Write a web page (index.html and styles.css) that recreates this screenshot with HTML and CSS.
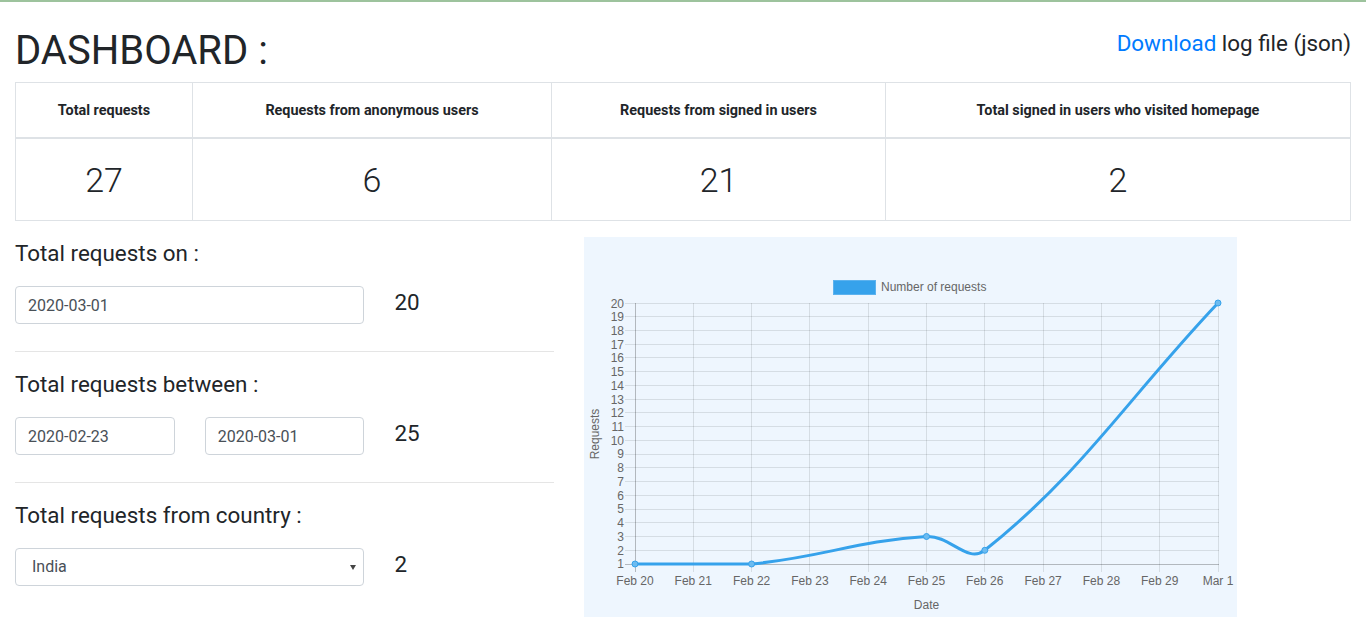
FILE: index.html
```html
<!DOCTYPE html>
<html lang="en">
<head>
<meta charset="utf-8">
<title>Dashboard</title>
<link rel="stylesheet" href="styles.css">
</head>
<body>
<div class="topbar"></div>
<div class="page">
  <header class="page-head">
    <h1 class="title">DASHBOARD :</h1>
    <p class="download"><a href="#">Download</a> log file (json)</p>
  </header>

  <table class="stats">
    <thead>
      <tr>
        <th class="w1">Total requests</th>
        <th class="w2">Requests from anonymous users</th>
        <th class="w3">Requests from signed in users</th>
        <th class="w4">Total signed in users who visited homepage</th>
      </tr>
    </thead>
    <tbody>
      <tr>
        <td>27</td>
        <td>6</td>
        <td>21</td>
        <td>2</td>
      </tr>
    </tbody>
  </table>

  <div class="layout">
    <div class="col-left">
      <section class="query">
        <h5 class="query-title">Total requests on :</h5>
        <div class="query-row">
          <div class="col-8"><input class="input" type="text" value="2020-03-01"></div>
          <div class="col-4"><div class="value">20</div></div>
        </div>
      </section>
      <hr class="divider">
      <section class="query">
        <h5 class="query-title">Total requests between :</h5>
        <div class="query-row">
          <div class="col-4"><input class="input" type="text" value="2020-02-23"></div>
          <div class="col-4"><input class="input" type="text" value="2020-03-01"></div>
          <div class="col-4"><div class="value">25</div></div>
        </div>
      </section>
      <hr class="divider">
      <section class="query">
        <h5 class="query-title">Total requests from country :</h5>
        <div class="query-row">
          <div class="col-8">
            <div class="select-wrap">
              <select class="input select">
                <option>India</option>
              </select>
            </div>
          </div>
          <div class="col-4"><div class="value">2</div></div>
        </div>
      </section>
    </div>

    <div class="col-right">
      <div class="chart">
        <svg class="chart-svg" width="653" height="380" viewBox="584 237 653 380" xmlns="http://www.w3.org/2000/svg">
          <!-- legend -->
          <rect x="833.5" y="280.5" width="42" height="14" fill="#36a2eb" stroke="#5cb2ee" stroke-width="1"/>
          <text x="881" y="291" class="lbl">Number of requests</text>

          <!-- horizontal grid -->
          <g stroke="rgba(0,0,0,0.1)" stroke-width="1">
            <line x1="625" y1="303.5" x2="1219" y2="303.5"/>
            <line x1="625" y1="316.5" x2="1219" y2="316.5"/>
            <line x1="625" y1="330.5" x2="1219" y2="330.5"/>
            <line x1="625" y1="344.5" x2="1219" y2="344.5"/>
            <line x1="625" y1="357.5" x2="1219" y2="357.5"/>
            <line x1="625" y1="371.5" x2="1219" y2="371.5"/>
            <line x1="625" y1="385.5" x2="1219" y2="385.5"/>
            <line x1="625" y1="399.5" x2="1219" y2="399.5"/>
            <line x1="625" y1="412.5" x2="1219" y2="412.5"/>
            <line x1="625" y1="426.5" x2="1219" y2="426.5"/>
            <line x1="625" y1="440.5" x2="1219" y2="440.5"/>
            <line x1="625" y1="454.5" x2="1219" y2="454.5"/>
            <line x1="625" y1="467.5" x2="1219" y2="467.5"/>
            <line x1="625" y1="481.5" x2="1219" y2="481.5"/>
            <line x1="625" y1="495.5" x2="1219" y2="495.5"/>
            <line x1="625" y1="509.5" x2="1219" y2="509.5"/>
            <line x1="625" y1="522.5" x2="1219" y2="522.5"/>
            <line x1="625" y1="536.5" x2="1219" y2="536.5"/>
            <line x1="625" y1="550.5" x2="1219" y2="550.5"/>
          </g>
          <!-- vertical grid -->
          <g stroke="rgba(0,0,0,0.1)" stroke-width="1">
            <line x1="693.5" y1="303" x2="693.5" y2="572"/>
            <line x1="751.5" y1="303" x2="751.5" y2="572"/>
            <line x1="809.5" y1="303" x2="809.5" y2="572"/>
            <line x1="868.5" y1="303" x2="868.5" y2="572"/>
            <line x1="926.5" y1="303" x2="926.5" y2="572"/>
            <line x1="984.5" y1="303" x2="984.5" y2="572"/>
            <line x1="1043.5" y1="303" x2="1043.5" y2="572"/>
            <line x1="1101.5" y1="303" x2="1101.5" y2="572"/>
            <line x1="1159.5" y1="303" x2="1159.5" y2="572"/>
            <line x1="1218.5" y1="303" x2="1218.5" y2="572"/>
          </g>
          <!-- axes -->
          <g stroke="rgba(0,0,0,0.25)" stroke-width="1">
            <line x1="635.5" y1="303" x2="635.5" y2="572"/>
            <line x1="625" y1="564.5" x2="1219" y2="564.5"/>
          </g>

          <!-- y tick labels -->
          <g class="lbl" text-anchor="end">
            <text x="624" y="307.5">20</text>
            <text x="624" y="321">19</text>
            <text x="624" y="334.8">18</text>
            <text x="624" y="348.5">17</text>
            <text x="624" y="362.2">16</text>
            <text x="624" y="376">15</text>
            <text x="624" y="389.7">14</text>
            <text x="624" y="403.5">13</text>
            <text x="624" y="417.2">12</text>
            <text x="624" y="430.9">11</text>
            <text x="624" y="444.7">10</text>
            <text x="624" y="458.4">9</text>
            <text x="624" y="472.1">8</text>
            <text x="624" y="485.9">7</text>
            <text x="624" y="499.6">6</text>
            <text x="624" y="513.3">5</text>
            <text x="624" y="527.1">4</text>
            <text x="624" y="540.8">3</text>
            <text x="624" y="554.6">2</text>
            <text x="624" y="568.3">1</text>
          </g>

          <!-- x tick labels -->
          <g class="lbl" text-anchor="middle">
            <text x="635" y="585">Feb 20</text>
            <text x="693.3" y="585">Feb 21</text>
            <text x="751.6" y="585">Feb 22</text>
            <text x="809.9" y="585">Feb 23</text>
            <text x="868.2" y="585">Feb 24</text>
            <text x="926.5" y="585">Feb 25</text>
            <text x="984.8" y="585">Feb 26</text>
            <text x="1043.1" y="585">Feb 27</text>
            <text x="1101.4" y="585">Feb 28</text>
            <text x="1159.7" y="585">Feb 29</text>
            <text x="1218" y="585">Mar 1</text>
          </g>

          <!-- axis titles -->
          <text class="lbl" x="926.5" y="608.5" text-anchor="middle">Date</text>
          <text class="lbl" x="0" y="0" text-anchor="middle" transform="translate(598.5 434) rotate(-90)">Requests</text>

          <!-- data line -->
          <path d="M635,564 C681.64,564 705.31,564 751.6,564 C821.91,557.37 856.8,540.59 926.5,536.5 C950.08,535.12 967.33,564 984.8,550.3 C1083.94,470.89 1124.72,401.92 1218,303"
                fill="none" stroke="#36a2eb" stroke-width="3" stroke-linejoin="round" stroke-linecap="round"/>
          <g fill="#6cbbf0" stroke="#36a2eb" stroke-width="1">
            <circle cx="635" cy="564" r="3"/>
            <circle cx="751.6" cy="564" r="3"/>
            <circle cx="926.5" cy="536.5" r="3"/>
            <circle cx="984.8" cy="550.3" r="3"/>
            <circle cx="1218" cy="303" r="3"/>
          </g>
        </svg>
      </div>
    </div>
  </div>
</div>
</body>
</html>
```

FILE: styles.css
```css
* {
  box-sizing: border-box;
}

html,
body {
  margin: 0;
  overflow: hidden;
}

body {
  font-family: Roboto, "Liberation Sans", sans-serif;
  color: #212529;
  background: #ffffff;
}

.topbar {
  height: 2px;
  background: #9dc39d;
}

.page {
  padding: 0 15px;
}

.page-head {
  display: flex;
  justify-content: space-between;
  align-items: flex-start;
}

.title {
  margin: 25px 0 7px;
  font-size: 40px;
  font-weight: 400;
  line-height: 48px;
}

.download {
  margin: 28px 0 0;
  font-size: 22.4px;
  line-height: 27px;
}

.download a {
  color: #007bff;
  text-decoration: none;
}

/* stats table */
.stats {
  width: 100%;
  border-collapse: separate;
  border-spacing: 0;
  table-layout: fixed;
}

.stats th,
.stats td {
  border-right: 1px solid #dee2e6;
  text-align: center;
  vertical-align: middle;
  padding: 0 12px;
}

.stats th:first-child,
.stats td:first-child {
  border-left: 1px solid #dee2e6;
}

.stats th {
  height: 57px;
  border-top: 1px solid #dee2e6;
  border-bottom: 2px solid #dee2e6;
  font-size: 14.4px;
  font-weight: 700;
  line-height: 21px;
}

.stats td {
  height: 82px;
  border-bottom: 1px solid #dee2e6;
  font-size: 34px;
  font-weight: 300;
  line-height: 40px;
}

.w1 { width: 178px; }
.w2 { width: 359px; }
.w3 { width: 334px; }
.w4 { width: 465px; }

/* lower layout */
.layout {
  display: flex;
  margin: 0 -15px;
}

.col-left {
  flex: 0 0 41.6667%;
  max-width: 41.6667%;
  padding: 19px 15px 0;
}

.col-right {
  flex: 0 0 50%;
  max-width: 50%;
  padding: 16px 15px 0;
}

.query-title {
  margin: 0 0 19.3px;
  font-size: 22.4px;
  font-weight: 400;
  line-height: 26.88px;
}

.query-row {
  display: flex;
  align-items: flex-start;
  margin: 0 -15px;
}

.col-8 {
  flex: 0 0 66.6667%;
  max-width: 66.6667%;
  padding: 0 15px;
}

.col-4 {
  flex: 0 0 33.3333%;
  max-width: 33.3333%;
  padding: 0 15px;
}

.input {
  display: block;
  width: 100%;
  height: 38px;
  margin: 0;
  padding: 6px 12px;
  font-family: Roboto, "Liberation Sans", sans-serif;
  font-size: 16px;
  line-height: 24px;
  color: #495057;
  background: #ffffff;
  border: 1px solid #ced4da;
  border-radius: 4px;
}

.select-wrap {
  position: relative;
}

.select {
  -webkit-appearance: none;
  appearance: none;
  padding: 6px 28px 6px 16px;
}

.select-wrap::after {
  content: "";
  position: absolute;
  right: 8px;
  top: 17px;
  width: 0;
  height: 0;
  border-left: 3.5px solid transparent;
  border-right: 3.5px solid transparent;
  border-top: 5px solid #444;
  pointer-events: none;
}

.value {
  padding-top: 3px;
  font-size: 22.4px;
  line-height: 26.88px;
}

.divider {
  margin: 26.8px 0 19px;
  border: 0;
  border-top: 1px solid rgba(0, 0, 0, 0.1);
}

/* chart */
.chart {
  height: 380px;
  background: #eef6fe;
}

.chart-svg {
  display: block;
}

.lbl {
  font-family: "Liberation Sans", Arial, sans-serif;
  font-size: 12px;
  fill: #666666;
}
```
